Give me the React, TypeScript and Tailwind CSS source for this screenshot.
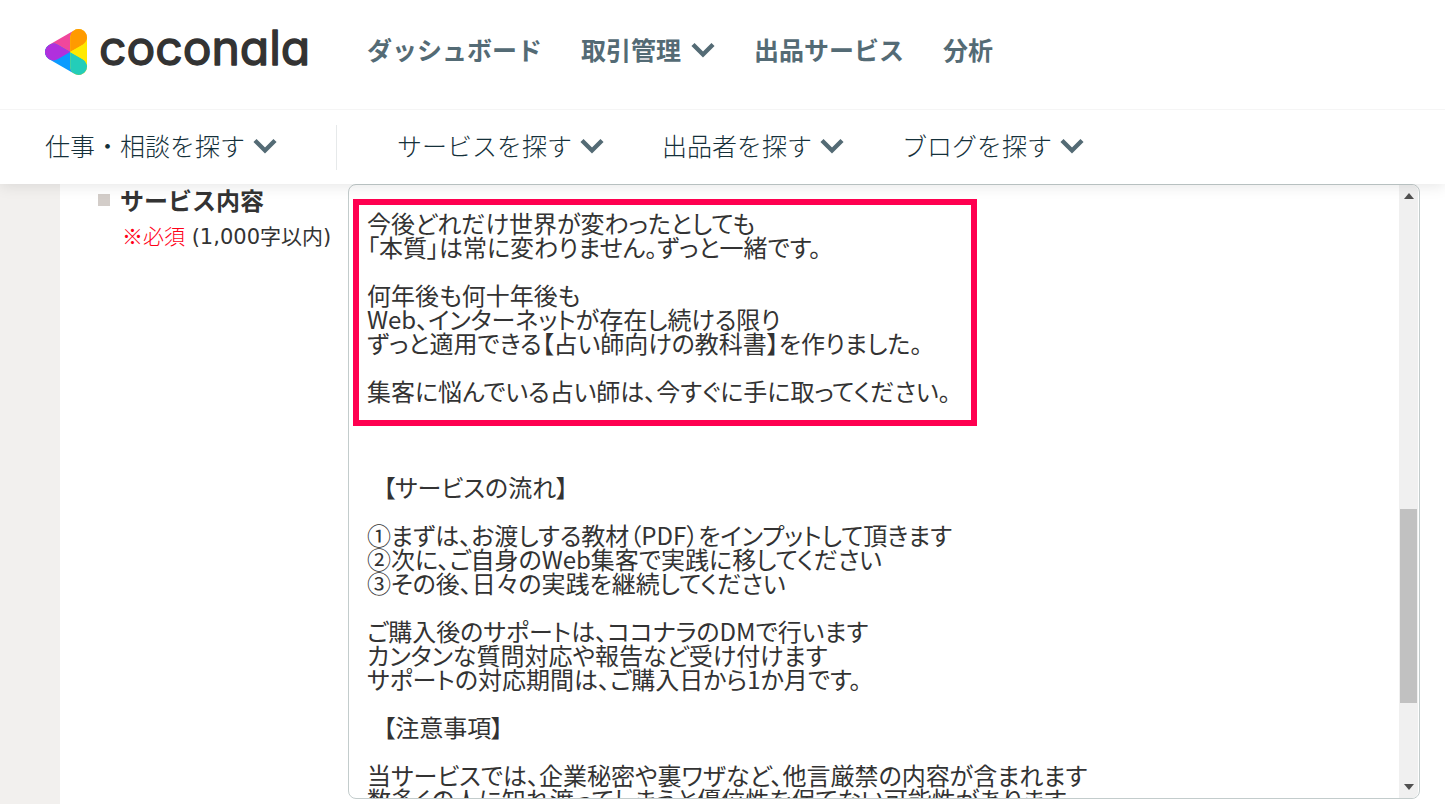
import React from "react";

const description = `今後どれだけ世界が変わったとしても
「本質」は常に変わりません。ずっと一緒です。

何年後も何十年後も
Web、インターネットが存在し続ける限り
ずっと適用できる【占い師向けの教科書】を作りました。

集客に悩んでいる占い師は、今すぐに手に取ってください。



   【サービスの流れ】

①まずは、お渡しする教材（PDF）をインプットして頂きます
②次に、ご自身のWeb集客で実践に移してください
③その後、日々の実践を継続してください

ご購入後のサポートは、ココナラのDMで行います
カンタンな質問対応や報告など受け付けます
サポートの対応期間は、ご購入日から1か月です。

   【注意事項】

当サービスでは、企業秘密や裏ワザなど、他言厳禁の内容が含まれます
数多くの人に知れ渡ってしまうと優位性を保てない可能性があります。`;

function Chevron() {
  return (
    <svg viewBox="0 0 24 16" className="h-4 w-6 shrink-0" fill="none" stroke="#546b75" strokeWidth="4.4" aria-hidden="true">
      <path d="M2 2.5 12 12.5 22 2.5" />
    </svg>
  );
}

function LogoMark() {
  return (
    <svg viewBox="0 0 42 46" className="h-[46px] w-[42px] shrink-0" aria-hidden="true">
      <defs>
        <clipPath id="side">
          <rect x="25.2" y="0" width="16.8" height="46" rx="8.4" />
        </clipPath>
        <clipPath id="upper">
          <rect x="-8.4" y="-8.4" width="45.8" height="16.8" rx="8.4" transform="translate(8.4 23) rotate(-30)" />
        </clipPath>
      </defs>
      <g strokeWidth="16.8" strokeLinecap="round">
        <path d="M8.4 23 33.6 8.4" stroke="#f0479c" />
        <path d="M8.4 23 33.6 37.6" stroke="#0a9bff" />
        <path d="M8.4 23 33.6 37.6" stroke="#b030dd" clipPath="url(#upper)" />
        <rect x="25.2" y="0" width="16.8" height="46" rx="8.4" fill="#ffe900" stroke="none" />
        <path d="M8.4 23 33.6 8.4" stroke="#ff9a00" clipPath="url(#side)" />
        <path d="M8.4 23 33.6 37.6" stroke="#23cdb9" clipPath="url(#side)" />
      </g>
      <path d="M25.2 23 42 13.3V32.7Z" fill="#ffe900" />
    </svg>
  );
}

function LogoName() {
  return (
    <svg viewBox="0 0 216 72" className="h-[72px] w-[216px] shrink-0" role="img" aria-label="coconala">
      <text
        x="0"
        y="49"
        fill="#333"
        stroke="#333"
        strokeWidth="1.4"
        strokeLinejoin="round"
        className="font-['Inter',sans-serif] text-[48px] font-normal [font-feature-settings:'cv11']"
      >
        coconala
      </text>
    </svg>
  );
}

function ScrollBar() {
  return (
    <div className="mr-px flex w-[19px] shrink-0 flex-col items-center justify-between rounded-r-md bg-[#f0f0f0] py-2" aria-hidden="true">
      <svg viewBox="0 0 10 6" className="h-1.5 w-2.5" fill="#505050"><path d="M0 6 5 0 10 6Z" /></svg>
      <div className="flex w-[17px] grow flex-col">
        <div className="grow-[309]" />
        <div className="h-[194px] bg-[#c1c1c1]" />
        <div className="grow-[81]" />
      </div>
      <svg viewBox="0 0 10 6" className="h-1.5 w-2.5" fill="#505050"><path d="M0 0 5 6 10 0Z" /></svg>
    </div>
  );
}

export default function App() {
  return (
    <div className="flex h-screen flex-col overflow-hidden bg-white font-['Noto_Sans_CJK_JP',sans-serif] text-[#333]">
      <header className="relative z-10 shrink-0 bg-white shadow-[0_2px_14px_rgba(0,0,0,0.1)]">
        <div className="flex h-[110px] items-start border-b border-[#f5f5f5] pl-[45px]">
          <a href="#" className="mt-[29px] flex h-[46px] w-[264px] items-center gap-3">
            <LogoMark />
            <LogoName />
          </a>
          <nav className="ml-[58px] flex h-[100px] items-center gap-[39px] text-[25px] font-bold text-[#546b75]" aria-label="メイン">
            <a href="#">ダッシュボード</a>
            <button type="button" className="flex items-center gap-2.5">取引管理<Chevron /></button>
            <a href="#">出品サービス</a>
            <a href="#">分析</a>
          </nav>
        </div>
        <nav className="flex h-[74px] items-center pl-[45px] text-[25px] font-light text-[#15303a]" aria-label="検索">
          <button type="button" className="flex w-[291px] items-center gap-2 pb-0.5">仕事・相談を探す<Chevron /></button>
          <div className="h-[45px] w-px bg-[#e6e9ea]" />
          <div className="ml-[60px] flex items-center gap-[58px] pb-0.5">
            <button type="button" className="flex items-center gap-2">サービスを探す<Chevron /></button>
            <button type="button" className="flex items-center gap-2">出品者を探す<Chevron /></button>
            <button type="button" className="flex items-center gap-2">ブログを探す<Chevron /></button>
          </div>
        </nav>
      </header>

      <main className="flex grow bg-[#f2f0ee] pl-[60px]">
        <div className="flex grow items-start bg-white pr-[25px] pl-[38px]">
          <div className="w-[250px] shrink-0">
            <label htmlFor="description" className="flex h-8 items-center gap-2.5 text-[24px] font-bold">
              <span className="size-3 bg-[#d3cdc9]" />
              サービス内容
            </label>
            <p className="pl-6 font-['DejaVu_Sans','Noto_Sans_CJK_JP',sans-serif] text-[21px] leading-[38px] whitespace-nowrap">
              <span className="font-['Noto_Sans_CJK_JP',sans-serif] font-light text-[#ff0018]">※必須</span> (1,000字以内)
            </p>
          </div>
          <div className="relative flex h-[615px] grow overflow-hidden rounded-lg border border-[#c3cccc]">
            <textarea
              id="description"
              defaultValue={description}
              spellCheck={false}
              className="block grow resize-none overflow-hidden bg-transparent pt-[26px] pl-[18px] text-[24px] leading-[24px] outline-none [font-feature-settings:'palt']"
            />
            <ScrollBar />
            <div className="pointer-events-none absolute top-[14px] left-1 h-[227px] w-[624px] border-[6px] border-[#ff0050]" />
          </div>
        </div>
      </main>
    </div>
  );
}
